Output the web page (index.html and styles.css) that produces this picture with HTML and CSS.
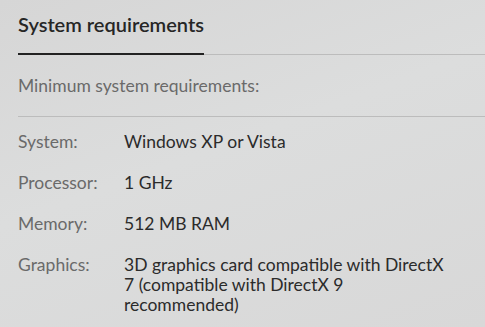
FILE: index.html
```html
<!DOCTYPE html>
<html lang="en">
<head>
    <meta charset="UTF-8">
    <meta name="viewport" content="width=device-width, initial-scale=1.0">
    <title>System requirements</title>
    <link rel="stylesheet" href="styles.css">
</head>
<body>
    <section class="requirements">
        <div class="tabs">
            <h3 class="tab active">System requirements</h3>
        </div>
        <div class="subtitle">Minimum system requirements:</div>
        <dl class="specs">
            <div class="spec">
                <dt>System:</dt>
                <dd>Windows XP or Vista</dd>
            </div>
            <div class="spec">
                <dt>Processor:</dt>
                <dd>1 GHz</dd>
            </div>
            <div class="spec">
                <dt>Memory:</dt>
                <dd>512 MB RAM</dd>
            </div>
            <div class="spec">
                <dt>Graphics:</dt>
                <dd>3D graphics card compatible with DirectX 7 (compatible with DirectX 9 recommended)</dd>
            </div>
        </dl>
    </section>
</body>
</html>
```

FILE: styles.css
```css
body {
    margin: 0;
    height: 100vh;
    background: linear-gradient(160deg, #d6d6d6 0%, #dcdddd 45%, #d8d8d8 100%);
    font-family: Lato, "Open Sans", sans-serif;
    color: #2b2b2b;
}

.requirements {
    padding-left: 18px;
}

.tabs {
    display: flex;
    border-bottom: 1px solid #bcbcbc;
}

.tab {
    margin: 0 0 -1px;
    padding: 12px 0 17px;
    font-size: 20px;
    line-height: 24px;
    font-weight: 600;
    color: #262626;
    border-bottom: 2px solid #222;
}

.subtitle {
    padding: 20px 0 19px;
    font-size: 17.5px;
    line-height: 22px;
    color: #6a6a6a;
    border-bottom: 1px solid #bcbcbc;
}

.specs {
    margin: 0;
    padding: 5px 0 0;
}

.spec {
    display: grid;
    grid-template-columns: 106px 325px;
    padding: 10px 0 11px;
    font-size: 17.5px;
    line-height: 20px;
}

.spec dt {
    color: #6a6a6a;
}

.spec dd {
    margin: 0;
    color: #2b2b2b;
}
```
